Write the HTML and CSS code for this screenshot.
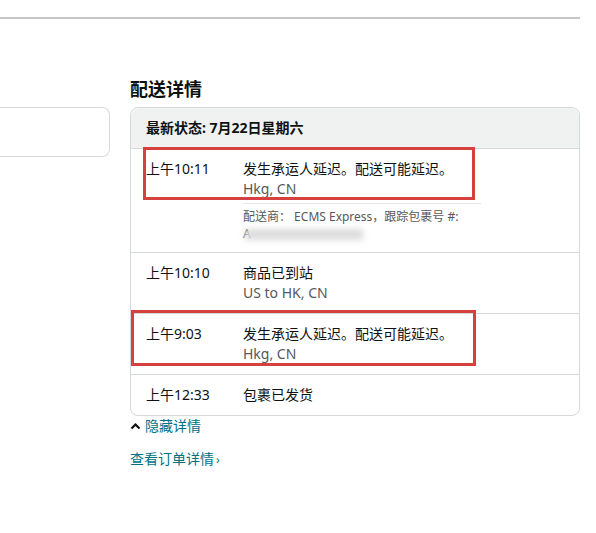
FILE: index.html
```
<!DOCTYPE html>
<html lang="zh-CN">
	<head>
		<meta charset="utf-8">
		<title>配送详情</title>
		<link rel="stylesheet" href="styles.css">
	</head>
	<body>
		<div class="topline"></div>
		<div class="page">
			<div class="side">
				<div class="sidebox"></div>
			</div>
			<div class="main">
				<h2>配送详情</h2>
				<div class="card">
					<div class="head">最新状态: 7月22日星期六</div>
					<div class="row">
						<div class="time">上午10:11</div>
						<div class="desc">
							<div>发生承运人延迟。配送可能延迟。</div>
							<div class="loc">Hkg, CN</div>
							<div class="carrier">
								配送商： ECMS Express，跟踪包裹号 #:<br>
								<span class="num">A</span><span class="blur"></span>
							</div>
						</div>
					</div>
					<div class="row">
						<div class="time">上午10:10</div>
						<div class="desc">
							<div>商品已到站</div>
							<div class="loc">US to HK, CN</div>
						</div>
					</div>
					<div class="row">
						<div class="time">上午9:03</div>
						<div class="desc">
							<div>发生承运人延迟。配送可能延迟。</div>
							<div class="loc">Hkg, CN</div>
						</div>
					</div>
					<div class="row last">
						<div class="time">上午12:33</div>
						<div class="desc">
							<div>包裹已发货</div>
						</div>
					</div>
					<div class="mark one"></div>
					<div class="mark two"></div>
				</div>
				<a class="toggle" href="#"><svg class="caret" width="11" height="8" viewBox="0 0 11 8"><path d="M1.5 6.5 L5.5 2.5 L9.5 6.5" fill="none" stroke="#0f1111" stroke-width="2.2"/></svg>隐藏详情</a>
				<a class="order" href="#">查看订单详情<span class="chev">›</span></a>
			</div>
		</div>
	</body>
</html>
```

FILE: styles.css
```
body
{
	margin: 0;
	background: #ffffff;
	color: #0f1111;
	font-family: "Noto Sans", "Noto Sans CJK SC", sans-serif;
	font-size: 14px;
}
.topline
{
	margin-top: 17px;
	width: 580px;
	border-top: 2px solid #c6c6c6;
}
.page
{
	display: grid;
	grid-template-columns: 110px 450px;
	column-gap: 20px;
	margin-top: 58px;
}
.side
{
	padding-top: 30px;
}
.sidebox
{
	height: 48px;
	border: 1px solid #d5d9d9;
	border-left: 0;
	border-radius: 0 8px 8px 0;
}
h2
{
	margin: 0 0 6px 0;
	font-size: 18px;
	line-height: 24px;
	font-weight: bold;
}
.card
{
	position: relative;
	border: 1px solid #d5d9d9;
	border-radius: 8px;
}
.head
{
	height: 40px;
	line-height: 40px;
	padding-left: 15px;
	background: #f0f2f2;
	border-bottom: 1px solid #d5d9d9;
	border-radius: 8px 8px 0 0;
	font-weight: bold;
}
.row
{
	display: flex;
	padding: 10px 0 10px 15px;
	border-bottom: 1px solid #d5d9d9;
	line-height: 20px;
}
.row.last
{
	border-bottom: 0;
}
.time
{
	width: 97px;
	flex: none;
}
.loc
{
	color: #565959;
}
.carrier
{
	width: 238px;
	margin-top: 4px;
	padding-top: 4px;
	border-top: 1px solid #e3e6e6;
	font-size: 12px;
	line-height: 17px;
	color: #565959;
}
.num
{
	color: #565959;
}
.blur
{
	display: inline-block;
	width: 118px;
	height: 11px;
	margin-left: -6px;
	vertical-align: middle;
	background: #dcdcdc;
	filter: blur(3px);
}
.mark
{
	position: absolute;
	border: 3px solid #d6403d;
}
.mark.one
{
	left: 12px;
	top: 39px;
	width: 326px;
	height: 47px;
}
.mark.two
{
	left: 0px;
	top: 202px;
	width: 339px;
	height: 50px;
}
a
{
	display: block;
	color: #007185;
	text-decoration: none;
	line-height: 20px;
}
.caret
{
	margin-right: 4px;
	vertical-align: 1px;
}
.order
{
	margin-top: 13px;
}
.chev
{
	margin-left: 2px;
	font-size: 12px;
}
```
